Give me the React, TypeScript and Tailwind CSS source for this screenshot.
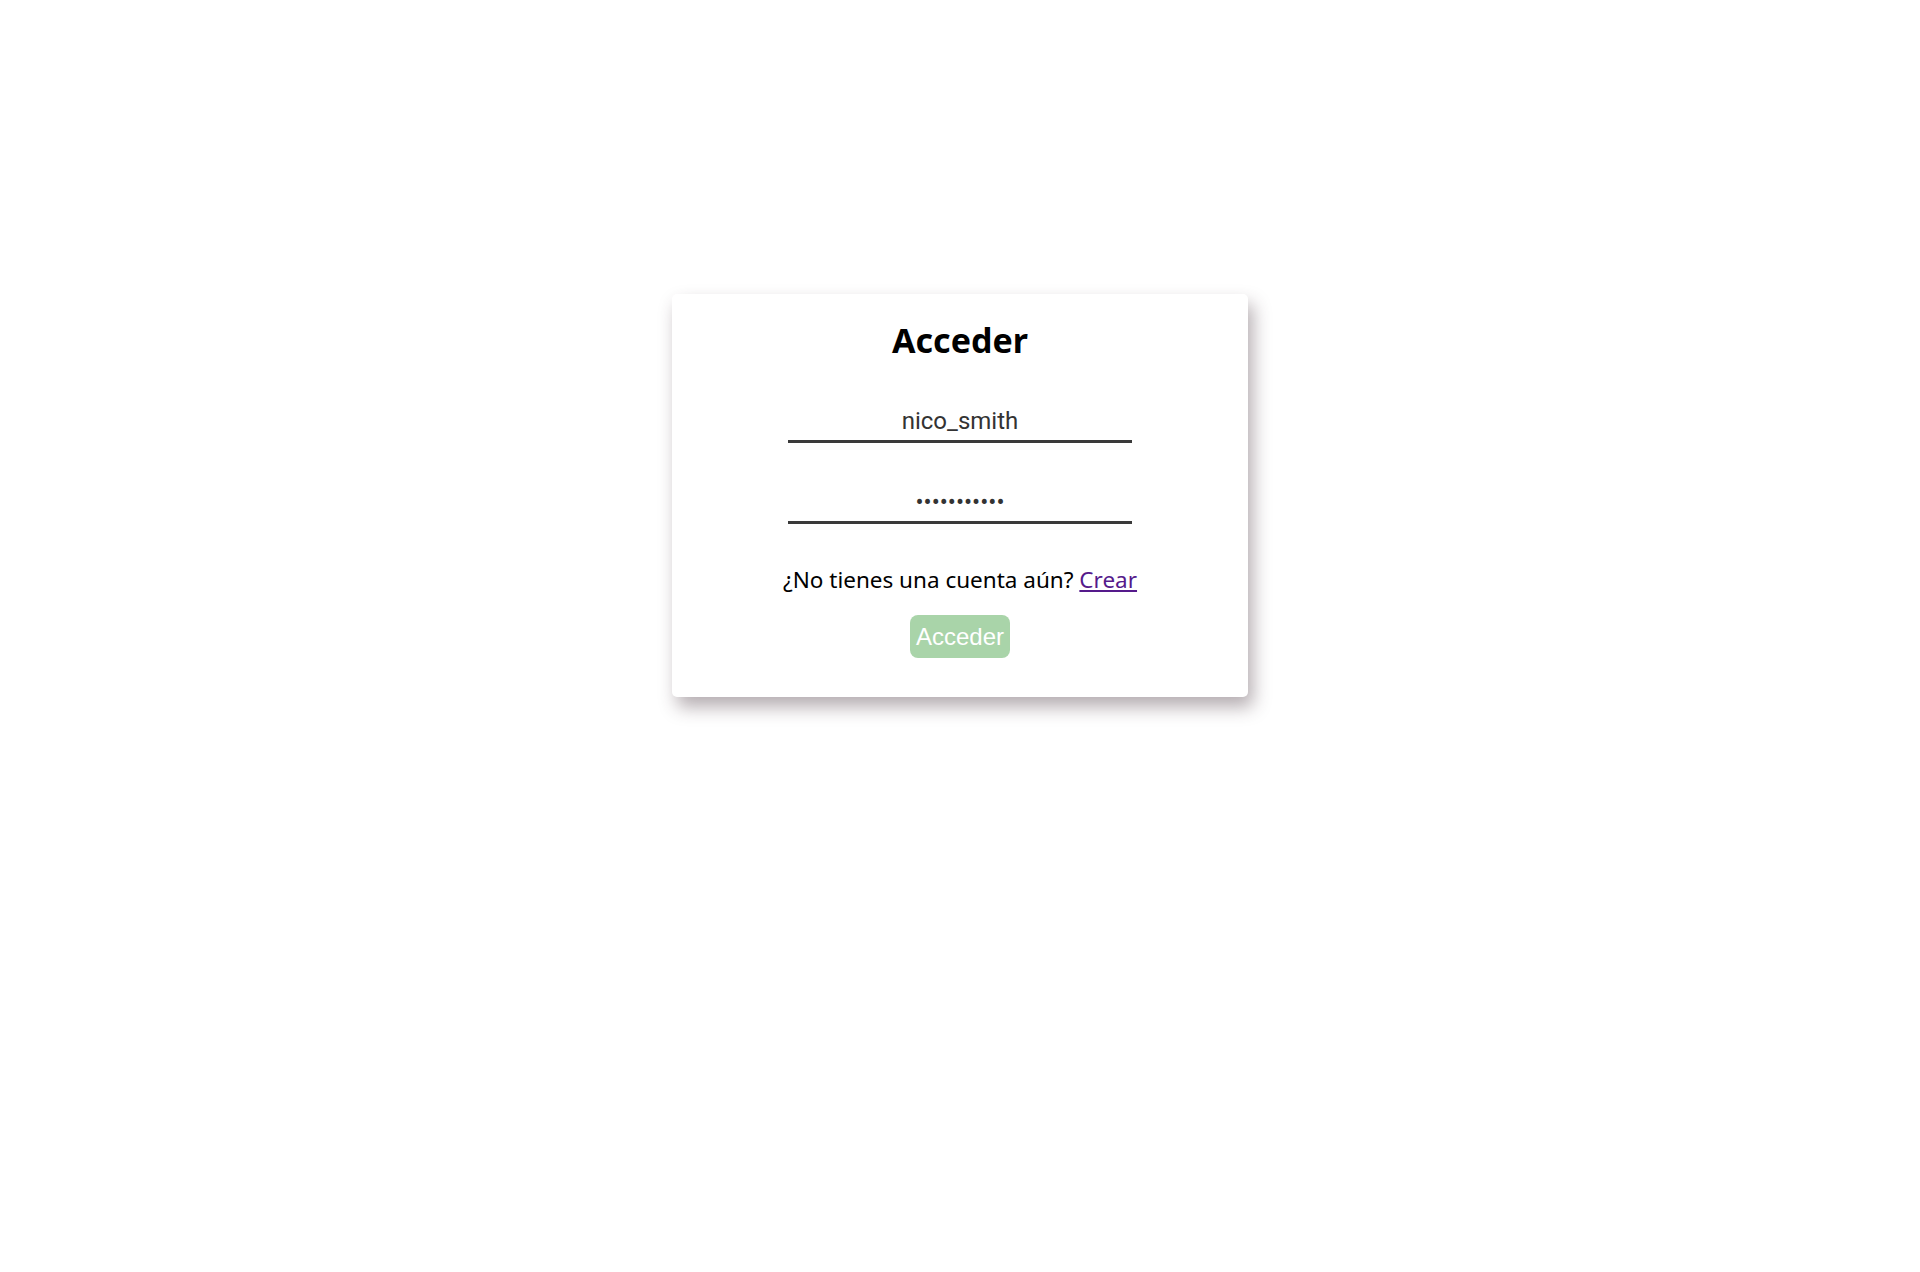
export default function App() {
    return (
        <div className="min-h-[1272px] w-full bg-white pt-[294px]">
            <div className="mx-auto w-[576px] rounded-[5px] bg-white pt-[26px] pb-[39px] shadow-[5px_10px_18px_rgba(60,40,50,0.38)] flex flex-col items-center">
                <h1 className="text-[34px] leading-[40px] font-bold text-black font-['Noto_Sans',sans-serif]">Acceder</h1>
                <form className="flex flex-col items-center" onSubmit={(e) => e.preventDefault()}>
                    <input
                        type="text"
                        defaultValue="nico_smith"
                        className="mt-[42px] h-[41px] w-[344px] border-b-[3px] border-[#3a3a3a] bg-transparent text-center text-[24px] text-[#333] outline-none font-['Roboto',sans-serif]"
                    />
                    <input
                        type="password"
                        defaultValue="contraseña1"
                        className="mt-[40px] h-[41px] w-[344px] border-b-[3px] border-[#3a3a3a] bg-transparent text-center text-[24px] text-[#333] outline-none font-['Roboto',sans-serif]"
                    />
                    <p className="mt-[41px] text-[22.5px] leading-[30px] text-black font-['Noto_Sans',sans-serif]">
                        ¿No tienes una cuenta aún? <a href="#" className="text-[#551a8b] underline">Crear</a>
                    </p>
                    <button className="mt-[20px] h-[43px] rounded-lg bg-[#a9d4a9] px-[6px] text-[24px] text-white font-['Liberation_Sans',sans-serif]">
                        Acceder
                    </button>
                </form>
            </div>
        </div>
    )
}
